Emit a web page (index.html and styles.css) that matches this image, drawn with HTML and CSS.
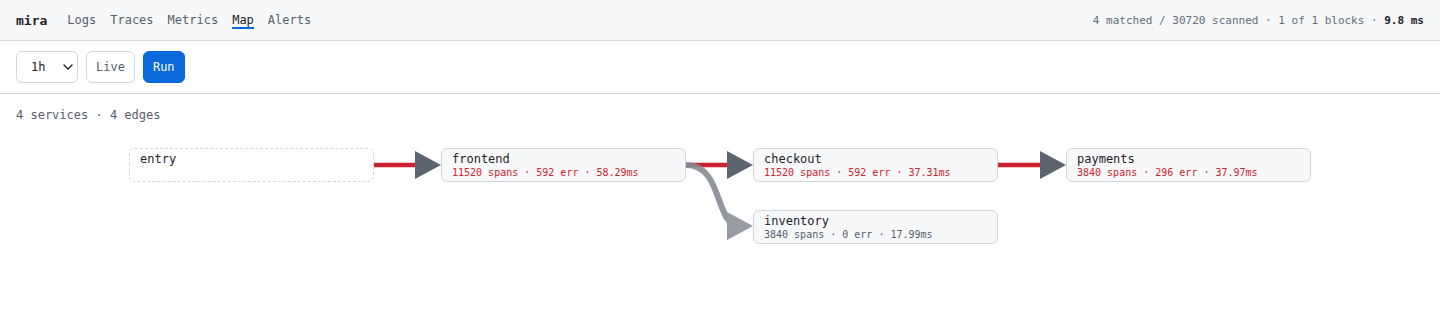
FILE: index.html
```html
<!DOCTYPE html>
<html lang="en">
<head>
    <meta charset="UTF-8">
    <meta name="viewport" content="width=device-width, initial-scale=1.0">
    <title>mira · Map</title>
    <link rel="stylesheet" href="styles.css">
</head>
<body>
    <!-- Top bar -->
    <header class="topbar">
        <div class="brand">mira</div>
        <nav class="nav">
            <a href="#">Logs</a>
            <a href="#">Traces</a>
            <a href="#">Metrics</a>
            <a href="#" class="active">Map</a>
            <a href="#">Alerts</a>
        </nav>
        <div class="stats">4 matched / 30720 scanned · 1 of 1 blocks · <b>9.8 ms</b></div>
    </header>

    <!-- Toolbar -->
    <div class="toolbar">
        <div class="select-wrap">
            <select class="range">
                <option>1h</option>
                <option>6h</option>
                <option>24h</option>
            </select>
            <svg class="chevron" width="10" height="6" viewBox="0 0 10 6"><path d="M1 1l4 4 4-4" fill="none" stroke="#1f2328" stroke-width="1.4" stroke-linecap="round" stroke-linejoin="round"/></svg>
        </div>
        <button class="btn">Live</button>
        <button class="btn primary">Run</button>
    </div>

    <!-- Service map -->
    <main class="map">
        <p class="summary">4 services · 4 edges</p>
        <div class="graph">
            <svg class="edges" width="1440" height="180" viewBox="0 0 1440 180">
                <path d="M374 35H420" class="edge err"/>
                <polygon points="415,21 441,35 415,49" class="head"/>
                <path d="M686 35H732" class="edge err"/>
                <polygon points="727,21 753,35 727,49" class="head"/>
                <path d="M998 35H1045" class="edge err"/>
                <polygon points="1040,21 1066,35 1040,49" class="head"/>
                <path d="M686 35C724 35 714 96 740 96" class="edge ok"/>
                <polygon points="727,82 753,96 727,110" class="head light"/>
            </svg>

            <div class="node ghost" style="left:129px;top:18px">
                <div class="name">entry</div>
            </div>
            <div class="node" style="left:441px;top:18px">
                <div class="name">frontend</div>
                <div class="meta bad">11520 spans · 592 err · 58.29ms</div>
            </div>
            <div class="node" style="left:753px;top:18px">
                <div class="name">checkout</div>
                <div class="meta bad">11520 spans · 592 err · 37.31ms</div>
            </div>
            <div class="node" style="left:1066px;top:18px">
                <div class="name">payments</div>
                <div class="meta bad">3840 spans · 296 err · 37.97ms</div>
            </div>
            <div class="node" style="left:753px;top:80px">
                <div class="name">inventory</div>
                <div class="meta">3840 spans · 0 err · 17.99ms</div>
            </div>
        </div>
    </main>
</body>
</html>
```

FILE: styles.css
```css
/* Base */
body {
    margin: 0;
    font-family: "DejaVu Sans Mono", monospace;
    color: #1f2328;
    background: #fff;
}

/* Top bar */
.topbar {
    display: flex;
    align-items: center;
    height: 40px;
    padding: 0 16px;
    background: #f6f8fa;
    border-bottom: 1px solid #d0d7de;
}

.brand {
    font-size: 13px;
    font-weight: bold;
    margin-right: 20px;
}

.nav {
    display: flex;
    gap: 14px;
    height: 100%;
}

.nav a {
    display: flex;
    align-items: center;
    font-size: 12px;
    color: #57606a;
    text-decoration: none;
    position: relative;
}

.nav a.active {
    color: #1f2328;
}

.nav a.active::after {
    content: "";
    position: absolute;
    left: 0;
    right: 0;
    top: 27px;
    height: 2px;
    background: #0969da;
}

.stats {
    margin-left: auto;
    font-size: 11px;
    color: #656d76;
}

.stats b {
    color: #1f2328;
    font-weight: 600;
}

/* Toolbar */
.toolbar {
    display: flex;
    align-items: center;
    gap: 8px;
    padding: 10px 16px;
    border-bottom: 1px solid #d0d7de;
}

.select-wrap {
    position: relative;
}

.range {
    appearance: none;
    -webkit-appearance: none;
    width: 62px;
    height: 32px;
    padding: 0 0 0 14px;
    font-family: inherit;
    font-size: 12px;
    color: #1f2328;
    background: #fff;
    border: 1px solid #d0d7de;
    border-radius: 6px;
}

.chevron {
    position: absolute;
    right: 5px;
    top: 13px;
    pointer-events: none;
}

.btn {
    height: 32px;
    padding: 0 9px;
    font-family: inherit;
    font-size: 12px;
    color: #57606a;
    background: #fff;
    border: 1px solid #d0d7de;
    border-radius: 6px;
    cursor: pointer;
}

.btn.primary {
    color: #fff;
    background: #0969da;
    border-color: #0969da;
}

/* Map */
.summary {
    margin: 0;
    padding: 14px 16px 0;
    font-size: 12px;
    line-height: 15px;
    color: #57606a;
}

.graph {
    position: relative;
    height: 180px;
    margin-top: 7px;
}

.edges {
    position: absolute;
    left: 0;
    top: 0;
}

.edge {
    fill: none;
}

.edge.err {
    stroke: #cf222e;
    stroke-width: 4.5;
}

.edge.ok {
    stroke: #868c94;
    stroke-width: 6;
    opacity: 0.9;
}

.head {
    fill: #5c6470;
}

.head.light {
    fill: #979ca3;
}

.node {
    position: absolute;
    box-sizing: border-box;
    width: 245px;
    height: 34px;
    padding: 3px 10px 0;
    background: #f6f8fa;
    border: 1px solid #d0d7de;
    border-radius: 6px;
}

.node.ghost {
    background: #fff;
    border-style: dashed;
}

.name {
    font-size: 12px;
    line-height: 14px;
}

.meta {
    font-size: 10px;
    line-height: 13px;
    color: #57606a;
}

.meta.bad {
    color: #cf222e;
}
```
